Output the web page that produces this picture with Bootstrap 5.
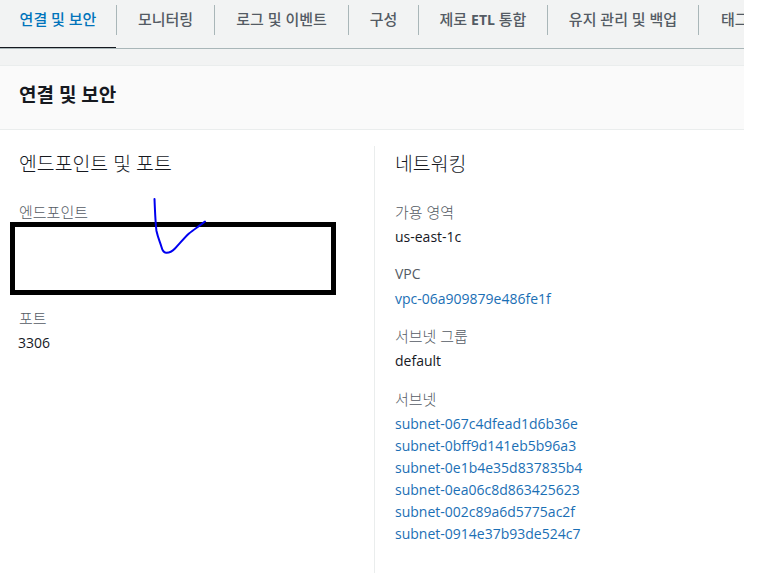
<!DOCTYPE html>
<html lang="ko">
<head>
<meta charset="utf-8">
<title>연결 및 보안</title>
<link href="https://cdn.jsdelivr.net/npm/bootstrap@5.3.0/dist/css/bootstrap.min.css" rel="stylesheet">
<style>
html,body{height:100%;overflow:hidden;background:#fff}
body{font-family:"Open Sans","Noto Sans CJK KR",sans-serif;font-size:14px;line-height:22px;color:#16191f}
.shell{width:744px;height:581px;overflow:hidden;position:relative;background:#fff}
.tabbar{height:49px;background:#f2f3f3;border-bottom:1px solid #a9b6b8;flex-wrap:nowrap;white-space:nowrap;overflow:hidden}
.tabitem{height:48px;padding-top:5px;position:relative;flex:none;color:#545b64;font-weight:500;font-size:15px;text-align:center;text-decoration:none}
.tabitem span{display:block;height:30px;line-height:29px;border-right:1px solid #a9b6b8}
.tabitem.on{color:#0073bb;height:49px}
.tabitem.on::after{content:"";position:absolute;left:0;bottom:0;width:116px;height:2px;background:#16191f}
.tabitem b{font-size:14px;font-weight:700}
.tw1{width:117px}.tw2{width:98px}.tw3{width:134px}.tw4{width:70px}.tw5{width:129px}.tw6{width:151px}.tw7{width:46px}
.tw7 span{border-right:0;text-align:left;padding-left:22px}
.gapband{height:17px;background:#f2f3f3;border-bottom:1px solid #eaeded}
.panelhead{height:64px;background:#fafafa;border-bottom:1px solid #eaeded;padding:0 19px 5px;display:flex;align-items:center;font-size:19px;font-weight:700}
.colleft{width:374px;padding:23px 19px 0 18px;flex:none}
.colleft .sect,.colleft .lbl{padding-left:1px}
.colright{flex:1;border-left:1px solid #eaeded;margin-top:16px;padding:7px 0 0 20px;height:427px}
.sect{font-size:19.4px;font-weight:300;line-height:22px;margin:0 0 26px;color:#16191f}
.lbl{color:#545b64;line-height:22px;font-size:15px;font-weight:300}
.lbl-latin{font-size:14px;font-weight:400}
.val{line-height:22px;margin-top:3px}
.fieldgap{margin-bottom:15.2px}
.lnk{color:#1b6fb5;text-decoration:none;display:block;line-height:22px}
.endspace{height:84px}
.mask{position:absolute;left:10px;top:222px;width:326px;height:73px;border:5px solid #000;background:#fff}
.scribble{position:absolute;left:0;top:0;width:744px;height:581px;pointer-events:none}
</style>
</head>
<body>
<div class="shell">
  <div class="tabbar d-flex">
    <a class="tabitem on tw1" href="#"><span>연결 및 보안</span></a>
    <a class="tabitem tw2" href="#"><span>모니터링</span></a>
    <a class="tabitem tw3" href="#"><span>로그 및 이벤트</span></a>
    <a class="tabitem tw4" href="#"><span>구성</span></a>
    <a class="tabitem tw5" href="#"><span>제로 <b>ETL</b> 통합</span></a>
    <a class="tabitem tw6" href="#"><span>유지 관리 및 백업</span></a>
    <a class="tabitem tw7" href="#"><span>태그</span></a>
  </div>
  <div class="gapband"></div>
  <div class="panelhead">연결 및 보안</div>
  <div class="d-flex">
    <div class="colleft">
      <h2 class="sect">엔드포인트 및 포트</h2>
      <div class="lbl">엔드포인트</div>
      <div class="endspace"></div>
      <div class="lbl">포트</div>
      <div class="val">3306</div>
    </div>
    <div class="colright">
      <h2 class="sect">네트워킹</h2>
      <div class="fieldgap"><div class="lbl">가용 영역</div><div class="val">us-east-1c</div></div>
      <div class="fieldgap"><div class="lbl lbl-latin">VPC</div><a class="val lnk" href="#">vpc-06a909879e486fe1f</a></div>
      <div class="fieldgap"><div class="lbl">서브넷 그룹</div><div class="val">default</div></div>
      <div><div class="lbl">서브넷</div>
        <a class="val lnk" href="#">subnet-067c4dfead1d6b36e</a>
        <a class="lnk" href="#">subnet-0bff9d141eb5b96a3</a>
        <a class="lnk" href="#">subnet-0e1b4e35d837835b4</a>
        <a class="lnk" href="#">subnet-0ea06c8d863425623</a>
        <a class="lnk" href="#">subnet-002c89a6d5775ac2f</a>
        <a class="lnk" href="#">subnet-0914e37b93de524c7</a>
      </div>
    </div>
  </div>
  <div class="mask"></div>
  <svg class="scribble" viewBox="0 0 744 581" fill="none"><path d="M154.5 199C155 212 155.5 224 156.5 231C158 238 160 242 161.5 247C162.5 251 163.5 252.5 166 252.7C169 253 172 251.5 175 248.5C179 244.5 184 238 189 233.5C194 229.5 200 225.5 205 221.5" stroke="#0000f0" stroke-width="2" stroke-linecap="round" stroke-linejoin="round"/></svg>
</div>
</body>
</html>
